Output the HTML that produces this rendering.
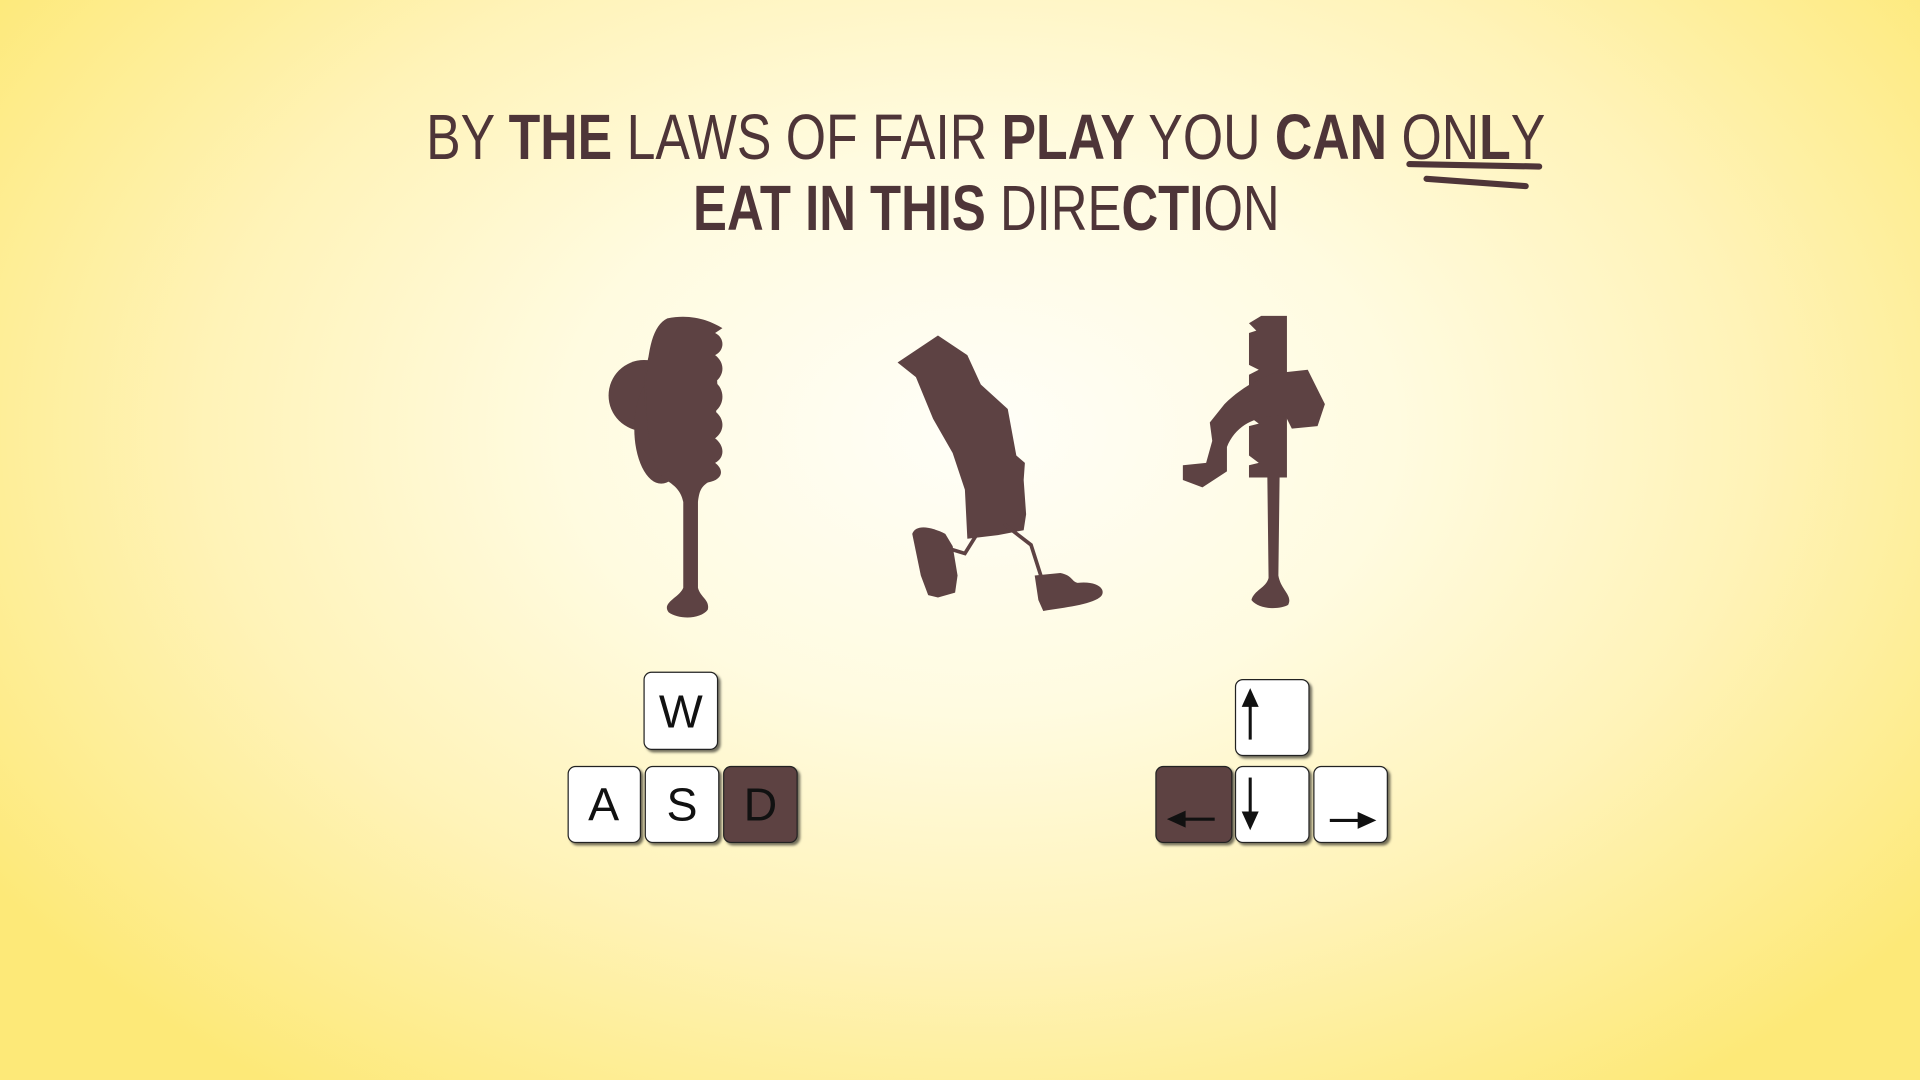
<!DOCTYPE html>
<html><head><meta charset="utf-8"><style>
html,body{margin:0;padding:0;width:1920px;height:1080px;overflow:hidden}
body{background:radial-gradient(ellipse 62% 75% at 51% 40%,#fffef8 0%,#fffbe0 35%,#fff3b8 65%,#fde978 100%)}
svg{position:absolute;left:0;top:0}
</style></head><body>
<svg width="1920" height="1080" viewBox="0 0 1568 882" preserveAspectRatio="none" xmlns="http://www.w3.org/2000/svg">
<defs>
<filter id="sh" x="-20%" y="-20%" width="150%" height="150%"><feDropShadow dx="2" dy="2" stdDeviation="1" flood-color="#000" flood-opacity="0.55"/></filter>
</defs>
<g fill="#4e3538" font-family="Liberation Sans Narrow, Liberation Sans, sans-serif">
<text x="348" y="130" font-size="52" textLength="914" lengthAdjust="spacingAndGlyphs">BY <tspan font-weight="bold">THE</tspan> LAWS OF FAIR <tspan font-weight="bold">PLAY</tspan> YOU <tspan font-weight="bold">CAN</tspan> ON<tspan font-weight="bold">L</tspan>Y</text>
<text x="566" y="188" font-size="52" textLength="479" lengthAdjust="spacingAndGlyphs"><tspan font-weight="bold">EAT IN THIS</tspan> DIRE<tspan font-weight="bold">CTI</tspan>ON</text>
</g>
<g stroke="#4e3538" stroke-linecap="round" fill="none">
<line x1="1151" y1="134" x2="1257" y2="136" stroke-width="5"/>
<line x1="1165" y1="146" x2="1246" y2="152" stroke-width="5"/>
</g>
<g fill="#5d4243">
<!-- left tree -->
<circle cx="526" cy="323" r="29"/>
<ellipse cx="540" cy="350" rx="22" ry="45"/>
<ellipse cx="556" cy="320" rx="30" ry="60"/>
<path d="M545 260 C565 256 580 262 590 268 L584 272 C592 276 592 286 584 290 C592 296 592 306 584 312 C592 318 592 330 584 336 C592 342 592 352 584 358 C592 364 592 374 584 378 C592 384 590 392 578 394 C572 398 571 402 570 410 L570 480 C572 488 580 490 578 498 C572 506 554 506 546 500 C540 492 555 488 558 480 L558 410 C556 400 550 396 544 392 C530 380 528 350 528 320 C528 290 532 266 545 260Z"/>
<!-- middle -->
<path d="M733 296 L766 274 L790 290 L801 314 L823 334 L830 372 L837 378 L836 392 L838 420 L836 433 L815 437 L790 440 L788 400 L778 370 L762 342 L748 308Z"/>
<path d="M745 436 C748 428 760 430 772 436 L778 446 L782 470 L780 484 L766 488 L758 486 L752 470Z"/>
<path d="M845 470 L866 468 C876 470 875 475 880 476 C900 474 904 484 898 488 C890 494 870 496 852 499 L848 490Z"/>
<g stroke="#5d4243" stroke-width="3" fill="none"><path d="M798 436 L788 452 L775 448"/><path d="M820 428 L842 445 L850 470"/></g>
<!-- right -->
<path d="M1030 258 L1051 258 L1051 390 L1020 390 L1020 380 L1028 378 L1020 372 L1020 348 L1028 346 L1020 340 L1020 306 L1028 302 L1020 298 L1020 272 L1026 270 L1020 264 Z"/>
<path d="M1040 305 L1068 302 L1082 330 L1076 348 L1055 350 L1050 340 C1030 338 1010 345 1002 365 L1002 385 L982 398 L966 392 L966 380 L985 378 L990 360 L988 345 L1000 330 C1012 318 1026 310 1040 305Z"/>
<path d="M1035 390 L1045 390 L1044 470 C1046 482 1056 486 1052 494 C1045 498 1028 498 1022 490 C1024 482 1034 480 1036 472Z"/>
</g>
<!-- keys -->
<g filter="url(#sh)" stroke="#222" stroke-width="1">
<rect x="526" y="549" width="60" height="63" rx="6" fill="#fff"/>
<rect x="464" y="626" width="59" height="62" rx="6" fill="#fff"/>
<rect x="527" y="626" width="60" height="62" rx="6" fill="#fff"/>
<rect x="591" y="626" width="60" height="62" rx="6" fill="#5d4243"/>
<rect x="1009" y="555" width="60" height="62" rx="6" fill="#fff"/>
<rect x="944" y="626" width="62" height="62" rx="6" fill="#5d4243"/>
<rect x="1009" y="626" width="60" height="62" rx="6" fill="#fff"/>
<rect x="1073" y="626" width="60" height="62" rx="6" fill="#fff"/>
</g>
<g font-family="Liberation Sans Narrow, Liberation Sans, sans-serif" font-size="38" text-anchor="middle">
<text x="556" y="594" fill="#111">W</text>
<text x="493" y="670" fill="#111">A</text>
<text x="557" y="670" fill="#111">S</text>
<text x="621" y="670" fill="#111">D</text>
</g>
<g stroke="#111" stroke-width="2.5" fill="#111">
<line x1="1021" y1="571" x2="1021" y2="604"/><path d="M1016 576 L1021 565 L1026 576Z"/>
<line x1="1021" y1="635" x2="1021" y2="668"/><path d="M1016 664 L1021 675 L1026 664Z"/>
<line x1="1086" y1="670" x2="1115" y2="670"/><path d="M1110 665 L1121 670 L1110 675Z"/>
<line x1="963" y1="669" x2="992" y2="669"/><path d="M967 664 L956 669 L967 674Z"/>
</g>
</svg>
</body></html>
